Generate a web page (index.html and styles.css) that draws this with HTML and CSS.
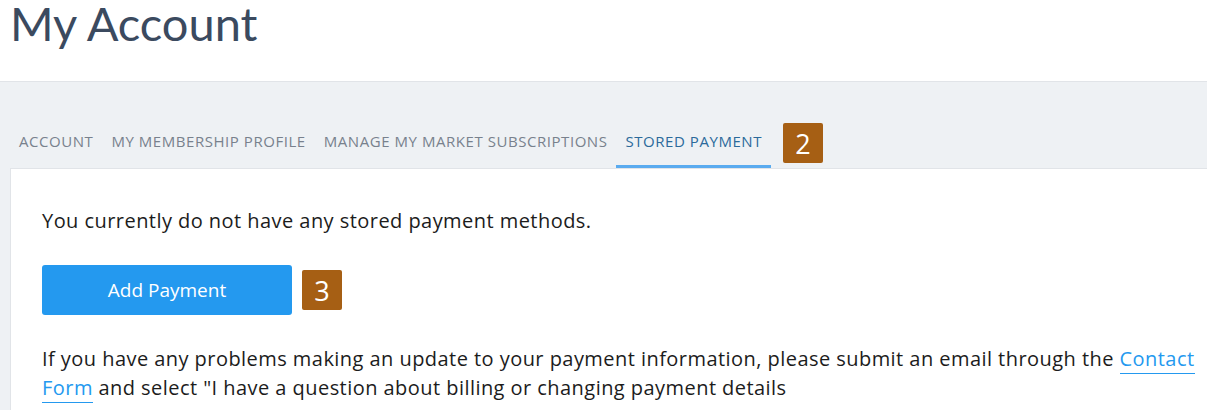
FILE: index.html
```html
<!DOCTYPE html>
<html lang="en">
<head>
    <meta charset="UTF-8">
    <title>My Account</title>
    <link rel="stylesheet" href="styles.css">
</head>
<body>
    <header class="page-header">
        <h1>My Account</h1>
    </header>
    <div class="account-area">
        <nav class="tabs">
            <a class="tab" href="#">Account</a>
            <a class="tab" href="#">My Membership Profile</a>
            <a class="tab" href="#">Manage My Market Subscriptions</a>
            <a class="tab active" href="#">Stored Payment</a>
            <span class="step-badge step-tab">2</span>
        </nav>
        <div class="panel">
            <p class="empty-note">You currently do not have any stored payment methods.</p>
            <div class="action-row">
                <button class="add-btn">Add Payment</button>
                <span class="step-badge">3</span>
            </div>
            <p class="help-text">If you have any problems making an update to your payment information, please submit an email through the <a href="#">Contact Form</a> and select "I have a question about billing or changing payment details</p>
        </div>
    </div>
</body>
</html>
```
FILE: styles.css
```css
body {
    margin: 0;
    font-family: 'Open Sans', sans-serif;
    background-color: #fff;
    overflow: hidden;
}

.page-header {
    height: 81px;
    border-bottom: 1px solid #e1e4e8;
    padding-left: 10px;
}

.page-header h1 {
    margin: 0;
    font-family: 'Lato', sans-serif;
    font-size: 47px;
    font-weight: 400;
    line-height: 46px;
    color: #3b4a5f;
}

.account-area {
    background-color: #eef1f4;
    padding-left: 10px;
}

.tabs {
    display: flex;
    align-items: flex-end;
    height: 86px;
}

.tab {
    padding: 0 9px 14px;
    border-bottom: 3px solid transparent;
    font-size: 15px;
    line-height: 20px;
    letter-spacing: 0.55px;
    text-transform: uppercase;
    text-decoration: none;
    color: #78818d;
}

.tab.active {
    color: #2b6a9b;
    border-bottom-color: #5aabef;
}

.step-badge {
    display: inline-flex;
    justify-content: center;
    align-items: center;
    width: 40px;
    height: 40px;
    border-radius: 2px;
    background-color: #a65f14;
    color: #fff;
    font-size: 27px;
    letter-spacing: 0;
}

.step-tab {
    margin: 0 0 5px 12px;
}

.panel {
    background-color: #fff;
    border-top: 1px solid #e1e4e8;
    border-left: 1px solid #e1e4e8;
    padding: 37px 10px 20px 31px;
    color: #1c1c1c;
    font-size: 20px;
    line-height: 29px;
    letter-spacing: 0.45px;
}

.panel p {
    margin: 0;
}

.action-row {
    display: flex;
    align-items: center;
    gap: 10px;
    margin: 30px 0 29px;
}

.add-btn {
    width: 250px;
    height: 50px;
    border: none;
    border-radius: 3px;
    background-color: #2499ef;
    color: #fff;
    font-family: inherit;
    font-size: 19px;
    letter-spacing: 0;
}

.help-text a {
    color: #2499ef;
    text-decoration: none;
    border-bottom: 1px solid #2499ef;
    padding-bottom: 1px;
}
```
